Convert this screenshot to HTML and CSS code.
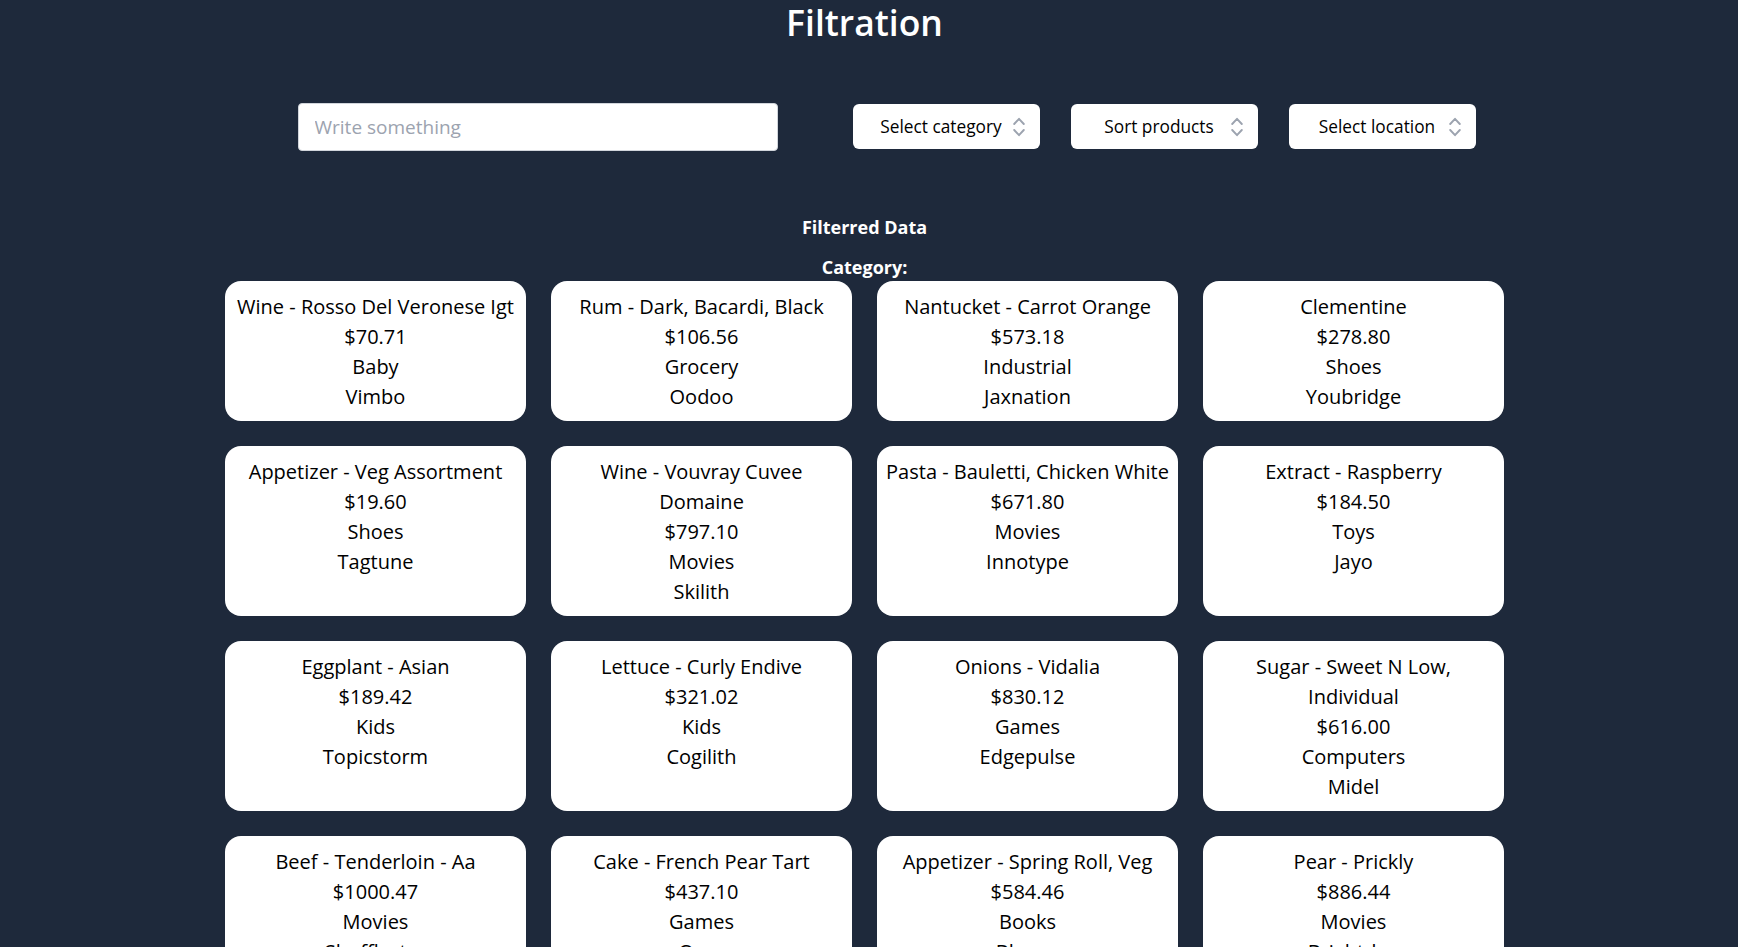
FILE: index.html
```html
<!DOCTYPE html>
<html lang="en">
<head>
<meta charset="utf-8">
<title>Filtration</title>
<link rel="stylesheet" href="styles.css">
</head>
<body>
<main class="page">
  <h1 class="title">Filtration</h1>

  <div class="controls">
    <input class="search" type="text" placeholder="Write something">
    <div class="select-wrap">
      <select class="select">
        <option>Select category</option>
      </select>
      <svg class="select-icon" viewBox="0 0 12 20" width="12" height="20" aria-hidden="true"><polyline points="1.2,7 6,1.8 10.8,7"/><polyline points="1.2,13 6,18.2 10.8,13"/></svg>
    </div>
    <div class="select-wrap">
      <select class="select">
        <option>Sort products</option>
      </select>
      <svg class="select-icon" viewBox="0 0 12 20" width="12" height="20" aria-hidden="true"><polyline points="1.2,7 6,1.8 10.8,7"/><polyline points="1.2,13 6,18.2 10.8,13"/></svg>
    </div>
    <div class="select-wrap">
      <select class="select">
        <option>Select location</option>
      </select>
      <svg class="select-icon" viewBox="0 0 12 20" width="12" height="20" aria-hidden="true"><polyline points="1.2,7 6,1.8 10.8,7"/><polyline points="1.2,13 6,18.2 10.8,13"/></svg>
    </div>
  </div>

  <h2 class="subtitle">Filterred Data</h2>
  <h3 class="category-label">Category:</h3>

  <div class="grid">
    <div class="card"><p>Wine - Rosso Del Veronese Igt</p><p>$70.71</p><p>Baby</p><p>Vimbo</p></div>
    <div class="card"><p>Rum - Dark, Bacardi, Black</p><p>$106.56</p><p>Grocery</p><p>Oodoo</p></div>
    <div class="card"><p>Nantucket - Carrot Orange</p><p>$573.18</p><p>Industrial</p><p>Jaxnation</p></div>
    <div class="card"><p>Clementine</p><p>$278.80</p><p>Shoes</p><p>Youbridge</p></div>

    <div class="card"><p>Appetizer - Veg Assortment</p><p>$19.60</p><p>Shoes</p><p>Tagtune</p></div>
    <div class="card"><p>Wine - Vouvray Cuvee Domaine</p><p>$797.10</p><p>Movies</p><p>Skilith</p></div>
    <div class="card"><p>Pasta - Bauletti, Chicken White</p><p>$671.80</p><p>Movies</p><p>Innotype</p></div>
    <div class="card"><p>Extract - Raspberry</p><p>$184.50</p><p>Toys</p><p>Jayo</p></div>

    <div class="card"><p>Eggplant - Asian</p><p>$189.42</p><p>Kids</p><p>Topicstorm</p></div>
    <div class="card"><p>Lettuce - Curly Endive</p><p>$321.02</p><p>Kids</p><p>Cogilith</p></div>
    <div class="card"><p>Onions - Vidalia</p><p>$830.12</p><p>Games</p><p>Edgepulse</p></div>
    <div class="card"><p>Sugar - Sweet N Low, Individual</p><p>$616.00</p><p>Computers</p><p>Midel</p></div>

    <div class="card"><p>Beef - Tenderloin - Aa</p><p>$1000.47</p><p>Movies</p><p>Shufflester</p></div>
    <div class="card"><p>Cake - French Pear Tart</p><p>$437.10</p><p>Games</p><p>Oozz</p></div>
    <div class="card"><p>Appetizer - Spring Roll, Veg</p><p>$584.46</p><p>Books</p><p>Blogxo</p></div>
    <div class="card"><p>Pear - Prickly</p><p>$886.44</p><p>Movies</p><p>Brightdog</p></div>
  </div>
</main>
</body>
</html>
```

FILE: styles.css
```css
html {
  scrollbar-width: none;
}

html::-webkit-scrollbar {
  display: none;
}

body {
  margin: 0;
  background: #1e293b;
  font-family: "Open Sans", "Noto Sans", sans-serif;
  color: #000;
}

.page {
  padding: 0 9px 40px 0;
}

.title {
  margin: 0;
  color: #fff;
  font-size: 35.5px;
  font-weight: 600;
  line-height: 45px;
  text-align: center;
}

.controls {
  display: flex;
  align-items: center;
  justify-content: center;
  gap: 31px;
  margin-top: 58px;
  padding-left: 44px;
}

.search {
  box-sizing: border-box;
  width: 480px;
  height: 48px;
  margin: 0 44px 0 0;
  padding: 0 16px;
  border: 1px solid #d1d5db;
  border-radius: 4px;
  background: #fff;
  font-family: inherit;
  font-size: 19px;
  color: #111;
  outline: none;
}

.search::placeholder {
  color: #9ca3af;
}

.select-wrap {
  position: relative;
  width: 187px;
  height: 45px;
  margin-top: -2px;
}

.select {
  box-sizing: border-box;
  width: 100%;
  height: 100%;
  padding: 0 26px 0 16px;
  border: none;
  border-radius: 6px;
  background: #fff;
  font-family: inherit;
  font-size: 17.3px;
  color: #000;
  -webkit-appearance: none;
  appearance: none;
  text-align: center;
  text-align-last: center;
  outline: none;
}

.select-icon {
  position: absolute;
  right: 15px;
  top: 13px;
  fill: none;
  stroke: #9ca3af;
  stroke-width: 1.9;
  stroke-linecap: round;
  stroke-linejoin: round;
  pointer-events: none;
}

.subtitle {
  margin: 64px 0 0;
  color: #fff;
  font-size: 18px;
  font-weight: 700;
  line-height: 24px;
  text-align: center;
}

.category-label {
  margin: 16px 0 0;
  color: #fff;
  font-size: 18px;
  font-weight: 700;
  line-height: 24px;
  text-align: center;
}

.grid {
  display: grid;
  grid-template-columns: repeat(4, 301px);
  justify-content: center;
  gap: 25px;
  margin-top: 2px;
}

.card {
  padding: 11px 6px 9px;
  border-radius: 16px;
  background: #fff;
  text-align: center;
  font-size: 20px;
  line-height: 30px;
}

.card p {
  margin: 0;
}
```
